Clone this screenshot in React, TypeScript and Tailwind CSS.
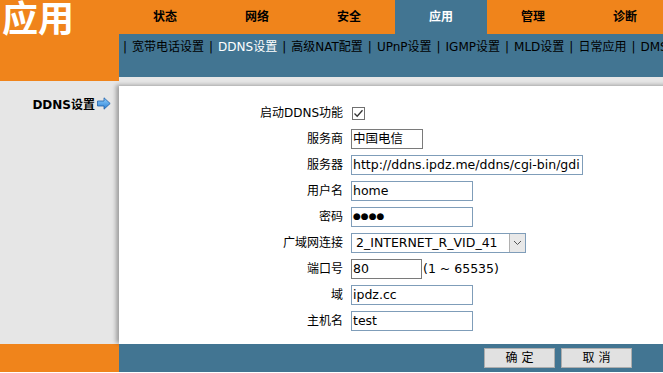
import React from "react";

const tabs = ["状态", "网络", "安全", "应用", "管理", "诊断"];
const subItems = ["宽带电话设置", "DDNS设置", "高级NAT配置", "UPnP设置", "IGMP设置", "MLD设置", "日常应用", "DMS"];

const font = { fontFamily: '"DejaVu Sans", "Noto Sans CJK SC", sans-serif' };

function Row({ label, children }: { label: string; children: React.ReactNode }) {
  return (
    <div className="flex items-center h-[26px]">
      <div className="w-[232px] text-right pr-[8px] text-[12px] text-black">{label}</div>
      <div className="flex items-center">{children}</div>
    </div>
  );
}

function TextBox({ value, w, gray, dots }: { value: string; w: string; gray?: boolean; dots?: boolean }) {
  return (
    <div
      className={`${w} h-[20px] border ${gray ? "border-[#7a7a7a]" : "border-[#7f9db9]"} bg-white flex items-center pl-[1px] ${
        dots ? "text-[9px] tracking-[0px]" : "text-[12.5px]"
      } text-black whitespace-nowrap overflow-hidden`}
    >
      {value}
    </div>
  );
}

export default function App() {
  return (
    <div className="w-[663px] h-[373px] bg-white overflow-hidden flex" style={font}>
      {/* 左侧栏 */}
      <div className="w-[119px] h-[372px] flex flex-col shrink-0">
        <div className="h-[81px] bg-[#f0841b] pl-[2px]">
          <div className="text-white font-bold text-[36px] leading-[40px]">应用</div>
        </div>
        <div className="flex-1 bg-[#e6e6e6] pt-[15px] pr-[8px] flex justify-end items-start">
          <span className="text-[12px] font-bold text-black">DDNS设置</span>
          <svg width="14" height="13" viewBox="0 0 14 13" className="ml-[2px] mt-[1px]">
            <defs>
              <linearGradient id="ag" x1="0" y1="0" x2="0" y2="1">
                <stop offset="0" stopColor="#8fd0ff" />
                <stop offset="1" stopColor="#2a7fd4" />
              </linearGradient>
            </defs>
            <polygon points="0.5,4 7,4 7,0.8 13.2,6.5 7,12.2 7,9 0.5,9" fill="url(#ag)" stroke="#1f5fa8" strokeWidth="0.8" />
          </svg>
        </div>
        <div className="h-[28px] bg-[#f0841b]" />
      </div>

      {/* 右侧主区域 */}
      <div className="flex-1 h-[372px] flex flex-col">
        <div className="h-[34px] flex bg-[#f0841b]">
          {tabs.map((t) => (
            <div
              key={t}
              className={`w-[92px] shrink-0 flex items-center justify-center text-[12px] font-bold ${
                t === "应用" ? "bg-[#427592] text-white" : "text-black"
              }`}
            >
              {t}
            </div>
          ))}
        </div>
        <div className="h-[43px] bg-[#427592] pl-[4px] pt-[4px] text-[12px] text-black whitespace-nowrap overflow-hidden">
          {subItems.map((s) => (
            <span key={s}>
              <span className="mr-[5px]">|</span>
              <span className={`mr-[5px] ${s === "DDNS设置" ? "text-white" : ""}`}>{s}</span>
            </span>
          ))}
        </div>
        <div className="h-[9px] bg-[#e6e6e6]" />
        <div className="flex-1 bg-white shadow-[-3px_-1px_4px_rgba(0,0,0,0.3)] pt-[14px]">
          <Row label="启动DDNS功能">
            <div className="w-[13px] h-[13px] ml-[1px] border border-[#707070] bg-white flex items-center justify-center">
              <svg width="11" height="11" viewBox="0 0 11 11">
                <polyline points="1.5,5.5 4.2,8.2 9.5,2.2" fill="none" stroke="#333" strokeWidth="1.3" />
              </svg>
            </div>
          </Row>
          <Row label="服务商">
            <TextBox value="中国电信" w="w-[72px]" gray />
          </Row>
          <Row label="服务器">
            <TextBox value="http://ddns.ipdz.me/ddns/cgi-bin/gdi" w="w-[232px]" />
          </Row>
          <Row label="用户名">
            <TextBox value="home" w="w-[122px]" />
          </Row>
          <Row label="密码">
            <TextBox value="●●●●" w="w-[122px]" dots />
          </Row>
          <Row label="广域网连接">
            <div className="w-[175px] h-[20px] border border-[#7f9db9] bg-white flex items-center">
              <span className="flex-1 pl-[4px] text-[12.5px] text-black whitespace-nowrap overflow-hidden">2_INTERNET_R_VID_41</span>
              <div className="w-[16px] h-[18px] bg-[#e8e8e8] border-l border-[#b0b0b0] flex items-center justify-center">
                <svg width="9" height="6" viewBox="0 0 9 6">
                  <polyline points="1,1 4.5,4.5 8,1" fill="none" stroke="#555" strokeWidth="1" />
                </svg>
              </div>
            </div>
          </Row>
          <Row label="端口号">
            <TextBox value="80" w="w-[71px]" gray />
            <span className="ml-[1px] text-[12.5px] text-black">(1 ~ 65535)</span>
          </Row>
          <Row label="域">
            <TextBox value="ipdz.cc" w="w-[122px]" />
          </Row>
          <Row label="主机名">
            <TextBox value="test" w="w-[122px]" />
          </Row>
        </div>
        <div className="h-[28px] bg-[#427592] flex items-center pl-[365px] gap-[6px]">
          <button className="w-[71px] h-[20px] bg-[#e1e1e1] border border-[#adadad] text-[12px] text-black tracking-[4px] pl-[4px]">
            确定
          </button>
          <button className="w-[71px] h-[20px] bg-[#e1e1e1] border border-[#adadad] text-[12px] text-black tracking-[4px] pl-[4px]">
            取消
          </button>
        </div>
      </div>
    </div>
  );
}
